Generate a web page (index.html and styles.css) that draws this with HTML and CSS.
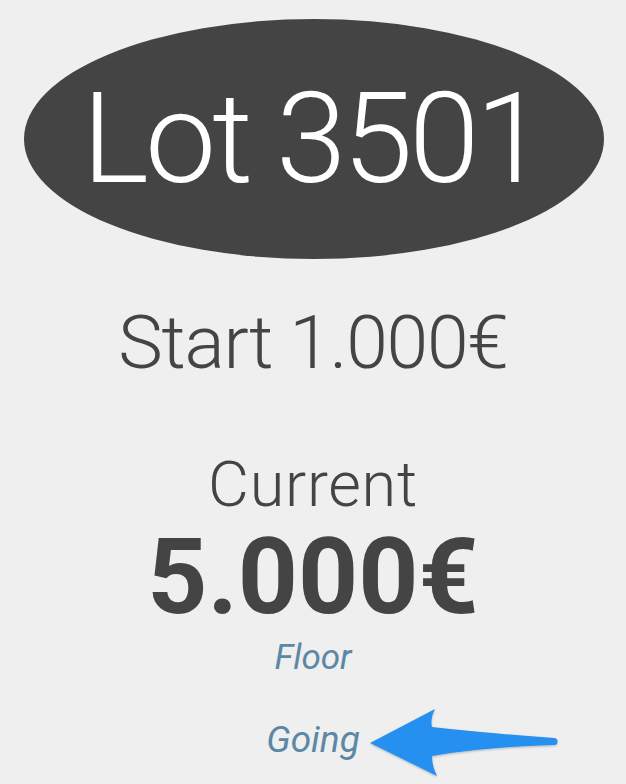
FILE: index.html
```html
<!DOCTYPE html>
<html>
<head>
<meta charset="utf-8">
<link rel="stylesheet" href="styles.css">
</head>
<body>
<main class="page">
  <div class="lot"><span class="lot-text">Lot 3501</span></div>
  <div class="start">Start 1.000€</div>
  <div class="current-label">Current</div>
  <div class="current-value">5.000€</div>
  <div class="status floor">Floor</div>
  <div class="status going"><span class="going-text">Going<svg class="arrow" width="197" height="78" viewBox="0 0 197 78"><defs><filter id="sh" x="-10%" y="-20%" width="120%" height="140%"><feDropShadow dx="0" dy="1" stdDeviation="1" flood-color="#000" flood-opacity="0.25"/></filter></defs><path filter="url(#sh)" d="M5 39 L70 5 Q65 15 67 23 Q120 29 189 34 A3.5 3.5 0 0 1 189 41 Q120 43 67 52 Q67 62 72 72 Z" fill="#2790f1"/></svg></span></div>
</main>
</body>
</html>
```
FILE: styles.css
```css
html, body {
  margin: 0;
  padding: 0;
  background: #efefef;
}
.page {
  width: 626px;
  height: 784px;
  display: flex;
  flex-direction: column;
  align-items: center;
  font-family: Roboto, "Liberation Sans", sans-serif;
  color: #444;
  overflow: hidden;
}
.lot {
  margin-top: 19px;
  margin-left: 2px;
  width: 580px;
  height: 240px;
  border-radius: 50%;
  background: #444;
  display: flex;
  align-items: center;
  justify-content: center;
}
.lot-text {
  color: #fff;
  font-weight: 300;
  font-size: 127px;
  letter-spacing: -4px;
  line-height: 1;
  margin-top: -2px;
  margin-right: 4px;
}
.start {
  margin-top: 46px;
  font-size: 75px;
  font-weight: 300;
  letter-spacing: -1.25px;
  line-height: 1;
}
.current-label {
  margin-top: 73px;
  font-size: 63px;
  font-weight: 300;
  letter-spacing: 0.7px;
  line-height: 1;
}
.current-value {
  margin-top: 9px;
  font-size: 105px;
  font-weight: 700;
  line-height: 1;
}
.status {
  font-style: italic;
  color: #5b88a6;
  line-height: 1;
}
.floor {
  margin-top: 10px;
  font-size: 35px;
}
.going {
  margin-top: 46px;
  font-size: 37px;
}
.going-text {
  position: relative;
  display: inline-block;
}
.arrow {
  position: absolute;
  left: calc(100% + 5px);
  top: -17px;
}
```
